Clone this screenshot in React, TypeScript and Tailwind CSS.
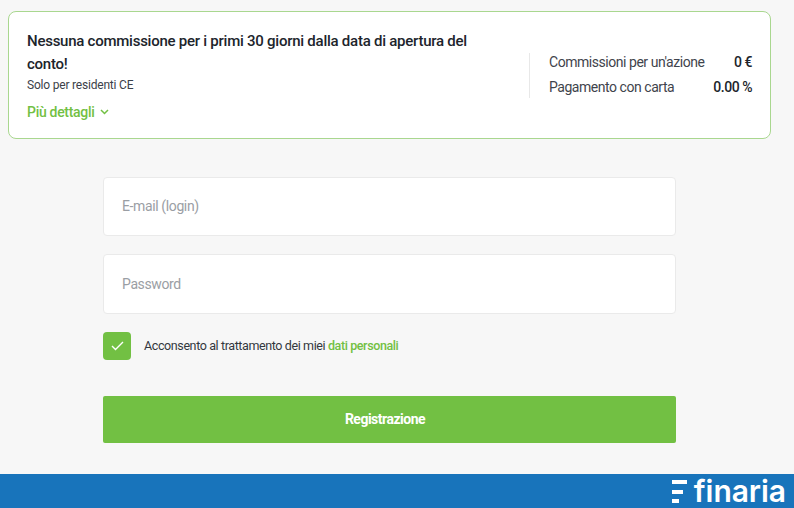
import React from 'react';

const font = { fontFamily: 'Roboto, "Liberation Sans", sans-serif' };

function Logo() {
  return (
    <div className="flex items-center gap-[7px] text-white">
      <svg width="15" height="23" viewBox="0 0 15 23" fill="currentColor">
        <rect x="0" y="0" width="15" height="4" />
        <rect x="0" y="10" width="11" height="4" />
        <rect x="0" y="19" width="7" height="4" />
      </svg>
      <span style={{ fontFamily: 'Inter, sans-serif' }} className="text-[30px] leading-none font-semibold tracking-[-0.05px]">finaria</span>
    </div>
  );
}

export default function App() {
  return (
    <div style={font} className="w-[794px] h-[508px] bg-[#f7f7f7] flex flex-col overflow-hidden">
      <div className="flex-1 pt-[11px] pl-2 pr-[23px]">
        <div className="h-[128px] bg-white border border-[#a9d78f] rounded-lg flex items-center pl-[18px] pr-[18px]">
          <div className="w-[461px] flex flex-col">
            <p className="pt-[1px] text-[15px] leading-[23px] font-medium text-[#20242b] tracking-[-0.25px]">
              Nessuna commissione per i primi 30 giorni dalla data di apertura del conto!
            </p>
            <p className="mt-[1px] text-[12px] leading-[16px] text-[#3c4149] tracking-[-0.2px]">Solo per residenti CE</p>
            <div className="mt-[9px] flex items-center gap-[5px] text-[#72c043]">
              <span className="text-[14px] leading-[20px] font-medium tracking-[-0.3px]">Più dettagli</span>
              <svg width="9" height="6" viewBox="0 0 9 6" fill="none" stroke="currentColor" strokeWidth="1.5">
                <path d="M1 1l3.5 3.5L8 1" />
              </svg>
            </div>
          </div>
          <div className="ml-[41px] w-[223px] h-[45px] border-l border-[#e8e8e8] pl-[19px] flex flex-col justify-center gap-[5px] pb-[2px] text-[14px] leading-[20px] text-[#3f444c] tracking-[-0.46px]">
            <div className="flex justify-between">
              <span>Commissioni per un'azione</span>
              <span className="font-medium text-[#20242b]">0 €</span>
            </div>
            <div className="flex justify-between">
              <span>Pagamento con carta</span>
              <span className="font-medium text-[#20242b]">0.00 %</span>
            </div>
          </div>
        </div>

        <div className="w-[573px] ml-[95px] mt-[38px] flex flex-col">
          <div className="h-[59px] bg-white border border-[#eaeaea] rounded flex items-center px-[18px] text-[14px] tracking-[-0.38px] text-[#9a9ea4]">
            E-mail (login)
          </div>
          <div className="h-[60px] mt-[18px] bg-white border border-[#eaeaea] rounded flex items-center px-[18px] text-[14px] tracking-[-0.38px] text-[#9a9ea4]">
            Password
          </div>
          <div className="mt-[18px] flex items-center gap-[13px]">
            <div className="w-[28px] h-[28px] bg-[#72c043] rounded flex items-center justify-center">
              <svg width="13" height="10" viewBox="0 0 13 10" fill="none" stroke="white" strokeWidth="1.4">
                <path d="M1 5l3.5 3.5L12 1" />
              </svg>
            </div>
            <span className="text-[12.5px] tracking-[-0.39px] text-[#33373e]">
              Acconsento al trattamento dei miei <span className="font-medium text-[#72c043]">dati personali</span>
            </span>
          </div>
          <button className="mt-[36px] h-[47px] pr-[9px] bg-[#72c043] rounded-[2px] text-white text-[14px] font-bold tracking-[-0.5px]">
            Registrazione
          </button>
        </div>
      </div>
      <div className="h-[34px] bg-[#1874bb] flex items-center justify-end pr-[8px]">
        <Logo />
      </div>
    </div>
  );
}
